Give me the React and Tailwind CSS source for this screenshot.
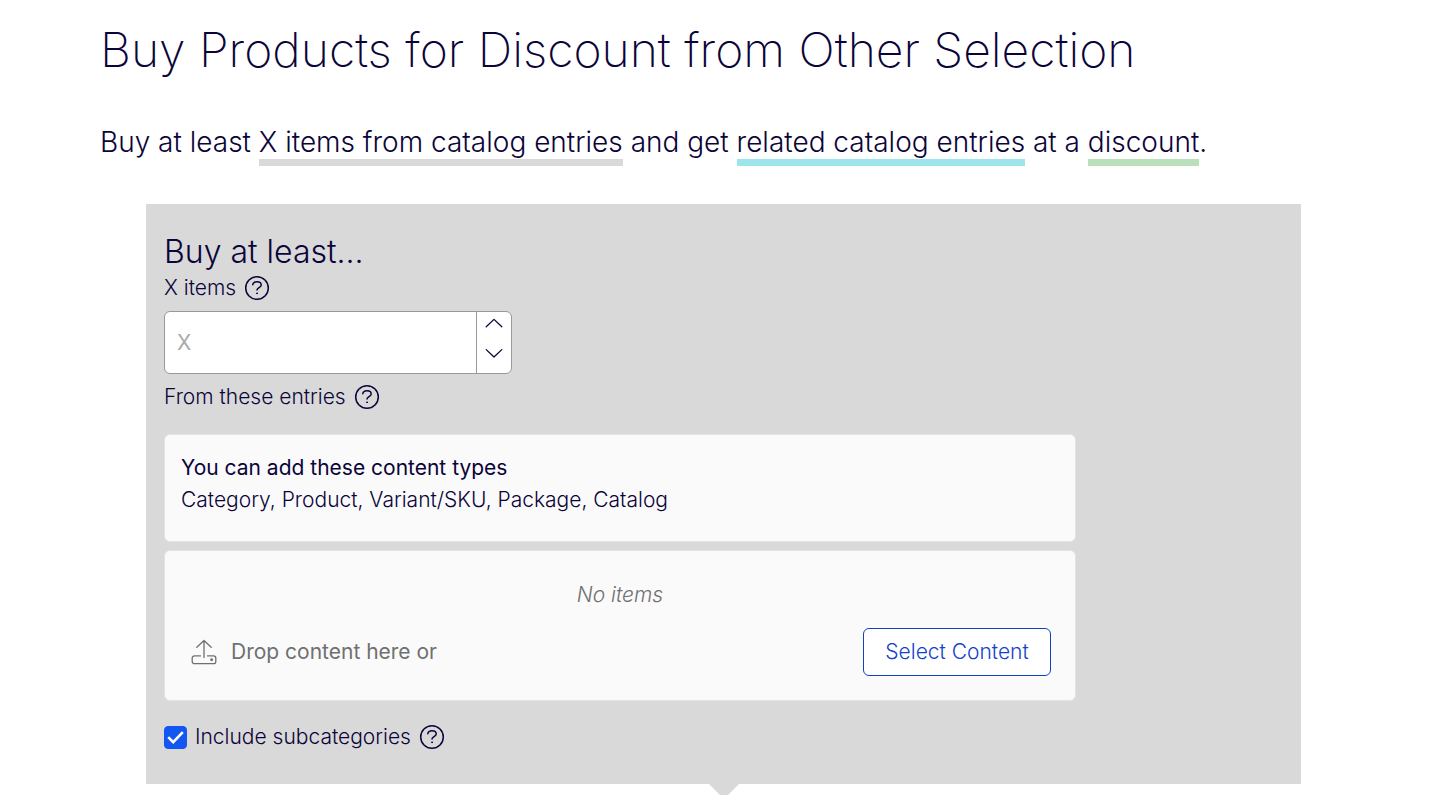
import React, { useState } from "react";

const HelpButton = ({ label }) => (
  <button type="button" aria-label={label} className="cursor-pointer">
    <svg viewBox="0 0 26 26" className="size-[26px]" fill="none" stroke="currentColor" strokeWidth="1.5" strokeLinecap="round" strokeLinejoin="round">
      <circle cx="13" cy="13" r="11.3" />
      <path d="M8.8 9.8c0-1.9 1.8-3 4.2-3s4.2 1.2 4.2 3.1c0 2.7-4.2 2.6-4.2 5.1" />
      <circle cx="13" cy="18.3" r="0.5" fill="currentColor" strokeWidth="0.9" />
    </svg>
  </button>
);

const UploadIcon = () => (
  <svg viewBox="0 0 26 26" className="size-[26px]" fill="none" stroke="currentColor" strokeWidth="1.3" strokeLinecap="round" strokeLinejoin="round">
    <path d="M13 18.5V1.5M5.8 8.2L13 1.5l7.2 6.7" />
    <path d="M9.5 16.9H3.4a2.2 2.2 0 0 0-2.2 2.2v3.4a2.2 2.2 0 0 0 2.2 2.2h19.2a2.2 2.2 0 0 0 2.2-2.2v-3.4a2.2 2.2 0 0 0-2.2-2.2h-6.1" />
    <circle cx="20.6" cy="20.8" r="0.8" fill="currentColor" />
  </svg>
);

const App = () => {
  const [amount, setAmount] = useState("");
  const [subcategories, setSubcategories] = useState(true);

  const step = (by) => setAmount(String(Math.max(0, Number(amount) + by)));

  return (
    <main className="bg-white px-[100px] pt-5 font-['Inter',sans-serif] font-light text-[#0b0439]">
      <h1 className="text-5xl leading-[60px] font-extralight">
        Buy Products for Discount from Other Selection
      </h1>

      <p className="mt-11 text-[28px] leading-9">
        Buy at least <span className="border-b-[7px] border-[#d9d9d9]">X items from catalog entries</span> and
        get <span className="border-b-[7px] border-[#9be5eb]">related catalog entries</span> at
        a <span className="border-b-[7px] border-[#b9dfbb]">discount</span>.
      </p>

      <section className="mt-11 mr-[51px] ml-[46px] bg-[#d9d9d9] px-[18px] pt-7 pb-[31px] text-[21px]">
        <h2 className="text-[32px] leading-10">Buy at least...</h2>

        <div className="flex h-8 items-center gap-2">
          <label htmlFor="amount">X items</label>
          <HelpButton label="About X items" />
        </div>

        <div className="mt-[7px] flex h-[63px] w-[348px] overflow-hidden rounded-md border border-[#999999] bg-white">
          <input
            id="amount"
            type="text"
            inputMode="numeric"
            placeholder="X"
            value={amount}
            onChange={(e) => setAmount(e.target.value)}
            className="min-w-0 flex-1 px-3 outline-none placeholder:font-normal placeholder:text-[#aaaaaa]"
          />
          <div className="flex w-[35px] flex-col border-l border-[#999999]">
            <button type="button" aria-label="Increase" onClick={() => step(1)} className="flex flex-1 items-start justify-center pt-1">
              <svg viewBox="0 0 18 14" className="h-[14px] w-[18px]" fill="none" stroke="currentColor" strokeWidth="1.3" strokeLinecap="round" strokeLinejoin="round">
                <path d="M1.2 10.8L9 3.4l7.8 7.4" />
              </svg>
            </button>
            <button type="button" aria-label="Decrease" onClick={() => step(-1)} className="flex flex-1 items-start justify-center pt-1">
              <svg viewBox="0 0 18 14" className="h-[14px] w-[18px]" fill="none" stroke="currentColor" strokeWidth="1.3" strokeLinecap="round" strokeLinejoin="round">
                <path d="M1.2 2.6L9 10l7.8-7.4" />
              </svg>
            </button>
          </div>
        </div>

        <div className="mt-[7px] flex h-8 items-center gap-2">
          <span>From these entries</span>
          <HelpButton label="About these entries" />
        </div>

        <div className="mt-[21px] flex max-w-[912px] flex-col gap-2">
          <div className="rounded-md border border-[#e4e4e4] bg-[#fafafa] px-4 pt-[17px] pb-[25px] leading-8">
            <h3 className="font-normal">You can add these content types</h3>
            <p>Category, Product, Variant/SKU, Package, Catalog</p>
          </div>

          <div className="rounded-md border border-[#e4e4e4] bg-[#fafafa] px-6 pt-7 pb-6 leading-8 text-[#707070]">
            <p className="text-center italic">No items</p>
            <div className="mt-[17px] flex items-center justify-between">
              <div className="flex items-center gap-[14px] pl-[2px] font-normal">
                <UploadIcon />
                <span>Drop content here or</span>
              </div>
              <button type="button" className="h-12 w-[188px] cursor-pointer rounded-md border border-[#0f43c4] bg-white text-[#1242cc]">
                Select Content
              </button>
            </div>
          </div>
        </div>

        <div className="mt-5 flex h-8 items-center gap-2">
          <div className="grid items-center justify-items-center">
            <input
              id="subcategories"
              type="checkbox"
              checked={subcategories}
              onChange={(e) => setSubcategories(e.target.checked)}
              className="col-start-1 row-start-1 size-[23px] appearance-none rounded-sm border border-[#999999] bg-white checked:border-[#1456f1] checked:bg-[#1456f1]"
            />
            {subcategories && (
              <svg viewBox="0 0 17 13" className="pointer-events-none col-start-1 row-start-1 h-[13px] w-[17px]" fill="none" stroke="white" strokeWidth="2.6">
                <path d="M1.2 6.2l5 5L15.8 1.2" />
              </svg>
            )}
          </div>
          <label htmlFor="subcategories">Include subcategories</label>
          <HelpButton label="About subcategories" />
        </div>
      </section>

      {/* pointer to the next step */}
      <div className="mr-[51px] ml-[46px]">
        <svg viewBox="0 0 30 15" className="mx-auto h-[15px] w-[30px]" fill="#d9d9d9" aria-hidden="true">
          <path d="M0 0h30L15 15z" />
        </svg>
      </div>
    </main>
  );
};

export default App;
